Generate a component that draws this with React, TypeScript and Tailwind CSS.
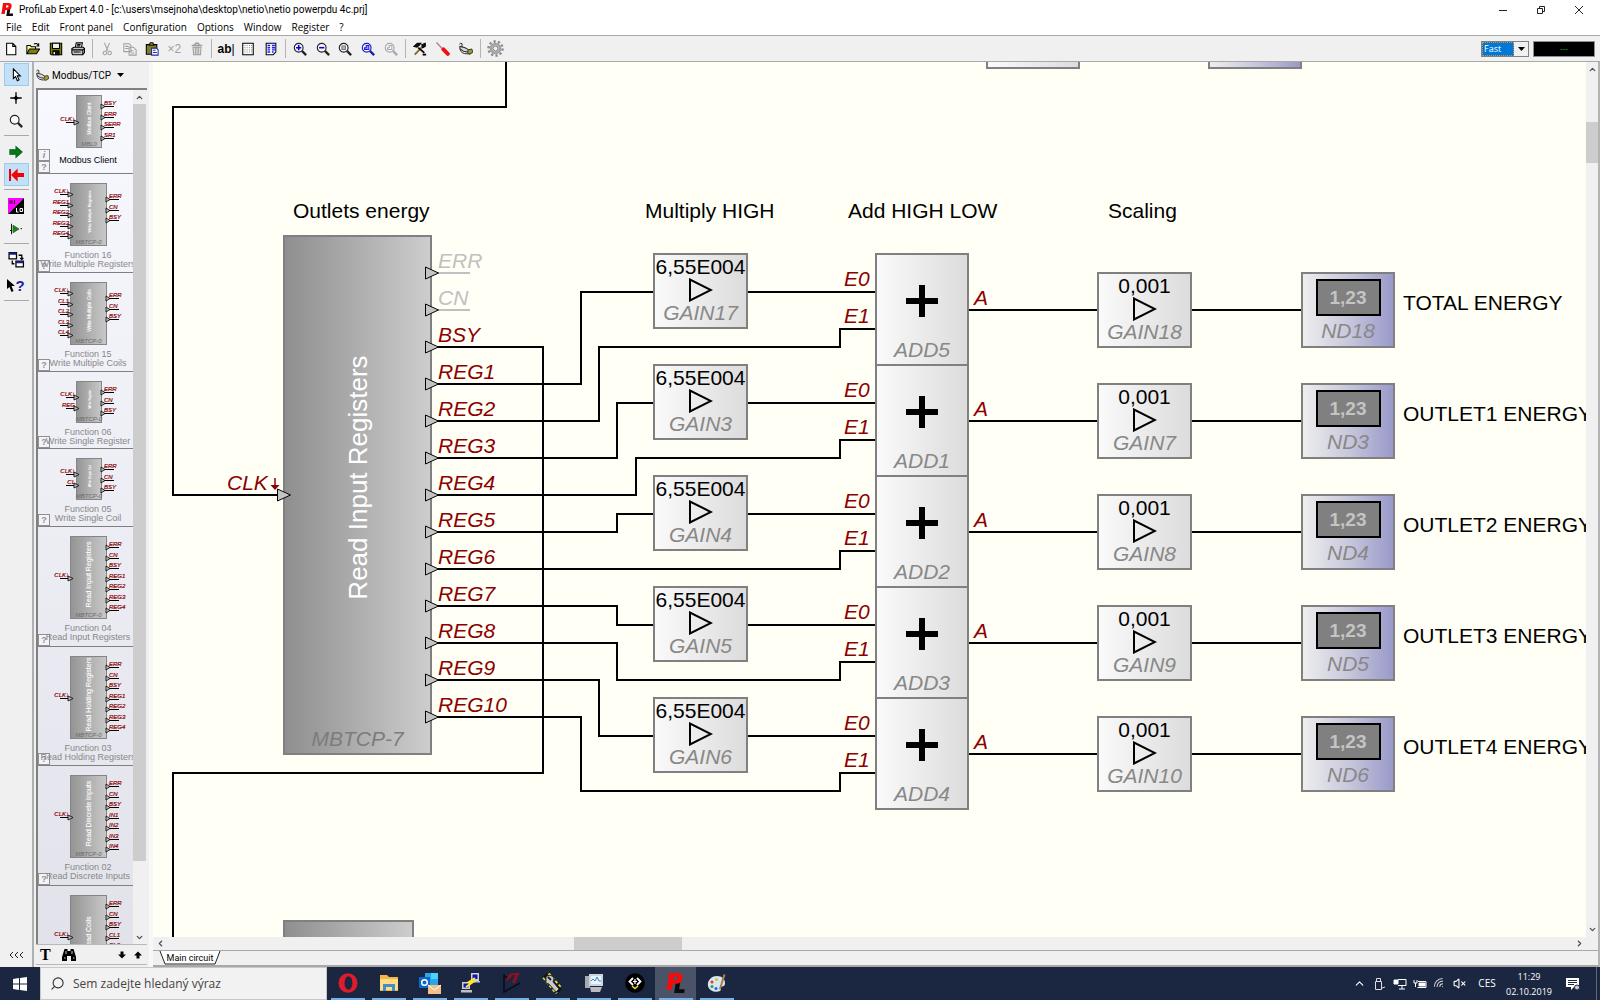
import React from "react";
import { ChevronUp, ChevronDown, ChevronLeft, ChevronRight, Search, Wifi, VolumeX } from "lucide-react";

type Kids = { children?: React.ReactNode };

/* ---------- shared drawings ---------- */

function Ico({ children, size = 14 }: Kids & { size?: number }) {
  return (
    <svg width={size} height={size} viewBox="0 0 16 16" fill="none" stroke="#000" strokeWidth="1.2" aria-hidden="true">
      {children}
    </svg>
  );
}

const Lens = ({ color = "#222", children }: Kids & { color?: string }) => (
  <Ico>
    <circle cx="6.500" cy="6.500" r="5" stroke={color} strokeWidth="1.3" fill="#f8f8ff" />
    <path d="M10.2 10.2L15 15" stroke={color} strokeWidth="2.6" />
    {children}
  </Ico>
);

const Plug = ({ size = 14 }: { size?: number }) => (
  <Ico size={size}>
    <path d="M0.500 2.500Q2 0.500 3.500 2V6M1 8c1 4 4 5.500 8 5.500h3" strokeWidth="1.1" stroke="#222" />
    <path d="M1 5l6 1.500 4 2.500-1 2.500-5-1-4-3z" fill="#d8d8d8" stroke="#333" />
    <path d="M10.500 9l4-1 1.500 3.500-4 2.500-2-2z" fill="#a8a020" stroke="#444" />
  </Ico>
);

const LogoPL = ({ size = 14 }: { size?: number }) => (
  <svg width={size} height={size} viewBox="0 0 16 16" aria-hidden="true">
    <path d="M8 6.500H11.500L10.500 13H15L14.500 16H6.500Z" fill="#0a0a0a" />
    <path d="M2.500 0H9q5 0 4 4.500Q12.500 8.500 8 8.500H5.500L4.500 13.500H0.500ZM6.500 2.800L6 5.600H7.500Q9 5.600 9.200 4.200Q9.400 2.800 8 2.800Z" fill="#f40c0c" fillRule="evenodd" />
  </svg>
);

/* ---------- title and menu ---------- */

function TitleBar() {
  return (
    <header className="flex h-[19px] items-center bg-white pr-[2px] pl-px">
      <LogoPL size={13} />
      <h1 className="ml-[5px] flex-1 font-['Roboto',sans-serif] text-[10px] leading-[19px]">
        ProfiLab Expert 4.0 - [c:\users\msejnoha\desktop\netio\netio powerpdu 4c.prj]
      </h1>
      <button aria-label="Minimize" className="flex w-[38px] justify-center">
        <svg width="10" height="10"><path d="M1 5.500h8" stroke="#222" /></svg>
      </button>
      <button aria-label="Restore" className="flex w-[38px] justify-center">
        <svg width="10" height="10" fill="none" stroke="#222"><path d="M1.500 3.500h5v5h-5zM3.500 3V1.500h5v5H7" /></svg>
      </button>
      <button aria-label="Close" className="flex w-[38px] justify-center">
        <svg width="10" height="10" stroke="#222"><path d="M1 1l8 8M9 1l-8 8" /></svg>
      </button>
    </header>
  );
}

function MenuBar() {
  const items = ["File", "Edit", "Front panel", "Configuration", "Options", "Window", "Register", "?"];
  return (
    <nav className="flex h-[16px] gap-[10px] bg-white pl-[6px] text-[10px] leading-[16px]">
      {items.map((t) => (
        <button key={t}>{t}</button>
      ))}
    </nav>
  );
}

/* ---------- main toolbar ---------- */

const toolGroups: { width: string; tools: [string, React.ReactNode][] }[] = [
  {
    width: "w-[89px]",
    tools: [
      ["New", <Ico><path d="M3 1.500h7l3.500 3.500v9.500H3zM10 1.500V5h3.500" fill="#fff" /></Ico>],
      ["Open", <Ico><path d="M1 13V4h4l1 1.500h5V8" fill="#ffffa0" /><path d="M1 13.500L4 8h11.500L12 13.500z" fill="#808000" /><path d="M9 2.500c2-1.500 4-1 5 1.500M14.500 1.500V4.500H12" /></Ico>],
      ["Save", <Ico><path d="M1.500 1.500h13v13h-12l-1-1z" fill="#808000" /><path d="M4 1.500h8v6H4z" fill="#f0f0f0" /><path d="M4.500 10h7v4.500h-7z" fill="#111" /><path d="M6 11.500v2.500" stroke="#fff" strokeWidth="1.500" /></Ico>],
      ["Print", <Ico><path d="M5 6l1-5h7l-1 5" fill="#fff" /><path d="M1 7.500L3.500 6H14l1.500 1.500V12l-2 2.500H2L1 13z" fill="#c8c8c8" /><path d="M1 9h12.500v5M13.500 9l2-1.500M3 11.500h8M7 3h4M6.500 4.500h4" /><path d="M9 11.500h2" stroke="#b0a000" /></Ico>],
    ],
  },
  {
    width: "w-[112px]",
    tools: [
      ["Cut", <Ico><g stroke="#a0a0a0"><path d="M5 1l4 9M11 1L7 10" /><circle cx="5.500" cy="12.500" r="2" /><circle cx="11" cy="12.500" r="2" /></g></Ico>],
      ["Copy", <Ico><g stroke="#a0a0a0"><path d="M1 2h6l2 2v7H1zM7 6h5l3 3v6H7z" fill="#f2f2f2" /><path d="M2.500 5h4M2.500 7.500h4M9 10h3M9 12.500h4" /></g></Ico>],
      ["Paste", <Ico><path d="M1.500 3h12v11h-12z" fill="#808020" /><path d="M5 3.500L6 1h3l1 2.500z" fill="#e8e050" /><path d="M7.500 7h5.500l2 2v6H7.500z" fill="#fff" stroke="#1c2c9c" /><path d="M9 9.500h3M9 12h4.500" stroke="#1c2c9c" /></Ico>],
      ["Duplicate", <span className="text-[12px] leading-none text-[#a0a0a0]">×2</span>],
      ["Delete", <Ico><g stroke="#9c9c9c"><path d="M2 4h12M5.500 3.500l1-2h3l1 2" strokeWidth="1.600" /><path d="M3.500 6h9l-.5 8.500h-8zM6 6.500V14M8 6.500V14M10 6.500V14" /></g></Ico>],
    ],
  },
  {
    width: "w-[67px]",
    tools: [
      ["Text", <span className="text-[12px] leading-none font-bold">ab<span className="font-normal">|</span></span>],
      ["Grid", <Ico><path d="M2 1.500h12v13H2z" fill="#fff" /><path d="M4 4h9M4 6.500h9M4 9h9M4 11.500h9" stroke="#666" strokeDasharray="1 1.500" strokeWidth="1" /></Ico>],
      ["Parts list", <Ico><path d="M2.500 1.500h11v10l-3 3h-8z" fill="#fff" /><path d="M4 4h3M9 4h3.500M4 6.500h3M9 6.500h3.500M4 9h3M9 9h3.500M4 11.500h3M9 11.500h2" stroke="#1818ff" strokeWidth="1.600" /></Ico>],
    ],
  },
  {
    width: "w-[113px]",
    tools: [
      ["Zoom in", <Lens><path d="M3.500 6.500h6M6.500 3.500v6" stroke="#0000e0" strokeWidth="1.800" /></Lens>],
      ["Zoom out", <Lens><path d="M3.500 6.500h6" stroke="#0000e0" strokeWidth="1.800" /></Lens>],
      ["Zoom page", <Lens><path d="M4.500 4.500h4v4h-4z" stroke="#777" fill="#bbb" /></Lens>],
      ["Zoom all", <Lens color="#1c1cb0"><path d="M4 8.500V6.500h2V4h3v4.500z" stroke="#2020e0" fill="#99f" /></Lens>],
      ["Zoom selection", <Lens color="#a8a8a8"><path d="M4 8.500V6.500h2V4h3v4.500z" stroke="#a8a8a8" /></Lens>],
    ],
  },
  {
    width: "w-[68px]",
    tools: [
      ["Build", <Ico><path d="M2 14.500L11 5" strokeWidth="2.200" stroke="#8a6a20" /><path d="M1 5l4-3.500h4L7 4 4.500 6zM10 3l4-1.500V5l-3 1.500z" fill="#111" /><path d="M6 6.500l7 6M11 14.500h4" strokeWidth="2" /></Ico>],
      ["Settings", <Ico><path d="M0.500 0.500l7 7.500" stroke="#a88" strokeWidth="1.600" /><path d="M8.500 8.500l5 5" stroke="#f01010" strokeWidth="4.500" strokeLinecap="round" /></Ico>],
      ["Connector", <Plug />],
    ],
  },
];

function Toolbar() {
  return (
    <div role="toolbar" aria-label="Main tools" className="flex h-[27px] items-center border-y border-[#a8a8a8] bg-[#f0f0f0] font-['Liberation_Sans',sans-serif]">
      {toolGroups.map((g, i) => (
        <React.Fragment key={i}>
          <div className={"flex " + g.width}>
            {g.tools.map(([name, icon]) => (
              <button key={name} aria-label={name} className="flex h-[20px] flex-1 items-center justify-center">
                {icon}
              </button>
            ))}
          </div>
          <div className="mx-[3px] h-[19px] w-px bg-[#b4b4b4]" />
        </React.Fragment>
      ))}
      <button aria-label="Options" className="flex h-[20px] w-[22px] items-center justify-center">
        <svg width="17" height="17" viewBox="0 0 17 17" fill="none" stroke="#8a8a8a">
          <circle cx="8.500" cy="8.500" r="7" strokeWidth="2.500" strokeDasharray="2.2 2.200" />
          <circle cx="8.500" cy="8.500" r="4.500" strokeWidth="2.600" stroke="#a0a0a0" />
          <circle cx="8.500" cy="8.500" r="2.500" strokeWidth="1" stroke="#777" />
        </svg>
      </button>
      <div className="flex-1" />
      <div className="relative mr-[4px] flex h-[16px] w-[48px] border border-[#808080] bg-white">
        <select aria-label="Simulation speed" className="w-[32px] appearance-none border border-dotted border-[#e09030] bg-[#0078d7] px-px font-['Open_Sans',sans-serif] text-[9px] leading-[12px] text-white">
          <option>Fast</option>
        </select>
        <span className="pointer-events-none flex flex-1 items-center justify-center bg-[#f0f0f0]">
          <svg width="7" height="4"><path d="M0 0h7L3.500 4z" /></svg>
        </span>
      </div>
      <output className="mr-[5px] h-[16px] w-[62px] border border-[#909090] bg-black text-center text-[8px] leading-[13px] text-[#18c018]">---</output>
    </div>
  );
}

/* ---------- left tool strip ---------- */

const Rule = () => <div className="mt-[3px] mb-[4px] h-px w-[25px] shrink-0 bg-[#a8a8a8]" />;

function SideButton({ label, active, children }: Kids & { label: string; active?: boolean }) {
  return (
    <button
      aria-label={label}
      className={
        active
          ? "flex h-[23px] w-[25px] items-center justify-center border border-[#99cdf0] bg-[#c4e0f6]"
          : "flex h-[23px] w-[25px] items-center justify-center"
      }
    >
      {children}
    </button>
  );
}

function ToolStrip() {
  return (
    <div role="toolbar" aria-label="Edit tools" className="flex w-[34px] shrink-0 flex-col items-center border-r-2 border-[#b0b0b0] bg-[#f0f0f0] pt-px">
      <SideButton label="Select" active><Ico><path d="M5 1v11l2.500-2.200L9.500 14.500l2-1L9.500 9H13z" fill="#fff" /></Ico></SideButton>
      <SideButton label="Cross"><Ico><path d="M8 1.500v13M1.500 8h13" strokeWidth="1.500" /><path d="M8 6L10 8 8 10 6 8z" fill="#000" /></Ico></SideButton>
      <SideButton label="Zoom"><Lens /></SideButton>
      <Rule />
      <SideButton label="Run"><Ico><path d="M1 5.500h7V2l7 6-7 6v-3.500H1z" fill="#0a7a0a" stroke="#063" /></Ico></SideButton>
      <SideButton label="Stop" active><Ico size={16}><path d="M2 2v12" stroke="#e00" strokeWidth="2" /><path d="M4 8l5-5v3.500h7v3H9V13z" fill="#f00" stroke="#e00" /></Ico></SideButton>
      <Rule />
      <SideButton label="High low">
        <svg width="16" height="16" viewBox="0 0 16 16" aria-hidden="true">
          <path d="M0 0h16L0 16z" fill="#f0f" />
          <path d="M16 0v16H0z" fill="#000" />
          <path d="M2 2v4M2 4h2M4 2v4M6.500 2v4" stroke="#404" />
          <path d="M8.500 10v4h2M12 10.500h2.500v3H12z" stroke="#fff" fill="none" />
        </svg>
      </SideButton>
      <SideButton label="Probe"><Ico size={12}><path d="M2 1v14M14 7.500h2M0 10h2" /><path d="M4 3l8 5-8 5z" fill="#0a8a1a" stroke="#363" /></Ico></SideButton>
      <Rule />
      <SideButton label="Switch window"><Ico size={17}><path d="M1 1.500h7v6H1zM7.500 9.500h7v5.500h-7z" fill="#fff" /><path d="M1 2.500h7M7.500 10.500h7" stroke="#1a1a90" strokeWidth="2" /><path d="M10 4h3v4M11.500 6.500L13 8l1.500-1.500M4 9v3h2" /></Ico></SideButton>
      <div className="h-[3px]" />
      <SideButton label="Context help">
        <span className="flex items-center font-['Liberation_Sans',sans-serif] text-[15px] leading-none font-bold text-[#2020a0]">
          <svg width="8" height="13" viewBox="0 0 8 13"><path d="M0 0v10l2.500-2L4.500 13l2-1L4.500 7H8z" /></svg>?
        </span>
      </SideButton>
      <Rule />
      <button aria-label="Collapse" className="mt-auto mb-[8px] flex">
        {[0, 1, 2].map((n) => (
          <svg key={n} width="5" height="8" fill="none" stroke="#222"><path d="M4 1L1 4l3 3" /></svg>
        ))}
      </button>
    </div>
  );
}

/* ---------- component palette ---------- */

type Part = {
  name: string[];
  height: string;
  narrow?: boolean;
  chip: number;
  body: string;
  bodySize: number;
  inputs: string[];
  inY: number;
  outputs: string[];
  outY: number;
  tag: string;
};

const regs = ["ERR", "CN", "BSY", "REG1", "REG2", "REG3", "REG4"];
const parts: Part[] = [
  { name: ["Modbus Client"], height: "h-[84px]", narrow: true, chip: 53, body: "Modbus Client", bodySize: 5, inputs: ["CLK↓"], inY: 27, outputs: ["BSY", "ERR", "SERR", "SR1"], outY: 11, tag: "MBL0" },
  { name: ["Function 16", "Write Multiple Registers"], height: "h-[99px]", chip: 63, body: "Write Multiple Registers", bodySize: 4, inputs: ["CLK↓", "REG1", "REG2", "REG3", "REG4"], inY: 11, outputs: ["ERR", "CN", "BSY"], outY: 16, tag: "MBTCP-0" },
  { name: ["Function 15", "Write Multiple Coils"], height: "h-[99px]", chip: 63, body: "Write Multiple Coils", bodySize: 5, inputs: ["CLK↓", "CL1", "CL2", "CL3", "CL4"], inY: 11, outputs: ["ERR", "CN", "BSY"], outY: 16, tag: "MBTCP-0" },
  { name: ["Function 06", "Write Single Register"], height: "h-[77px]", narrow: true, chip: 42, body: "Write Register", bodySize: 3, inputs: ["CLK↓", "REG"], inY: 16, outputs: ["ERR", "CN", "BSY"], outY: 11, tag: "MBTCP-0" },
  { name: ["Function 05", "Write Single Coil"], height: "h-[78px]", narrow: true, chip: 42, body: "Write Single Coil", bodySize: 3, inputs: ["CLK↓", "CL"], inY: 16, outputs: ["ERR", "CN", "BSY"], outY: 11, tag: "MBTCP-0" },
  { name: ["Function 04", "Read Input Registers"], height: "h-[120px]", chip: 83, body: "Read Input Registers", bodySize: 7, inputs: ["CLK↓"], inY: 42, outputs: regs, outY: 11, tag: "MBTCP-0" },
  { name: ["Function 03", "Read Holding Registers"], height: "h-[119px]", chip: 83, body: "Read Holding Registers", bodySize: 7, inputs: ["CLK↓"], inY: 42, outputs: regs, outY: 11, tag: "MBTCP-0" },
  { name: ["Function 02", "Read Discrete Inputs"], height: "h-[120px]", chip: 83, body: "Read Discrete Inputs", bodySize: 7, inputs: ["CLK↓"], inY: 42, outputs: ["ERR", "CN", "BSY", "IN1", "IN2", "IN3", "IN4"], outY: 11, tag: "MBTCP-0" },
  { name: ["Function 01", "Read Coils"], height: "h-[120px]", chip: 83, body: "Read Coils", bodySize: 7, inputs: ["CLK↓"], inY: 42, outputs: ["ERR", "CN", "BSY", "CL1", "CL2", "CL3", "CL4"], outY: 11, tag: "MBTCP-0" },
];

const maroon = "#8b0000";

function ChipDrawing({ p }: { p: Part }) {
  const x0 = p.narrow ? 38 : 32;
  const x1 = p.narrow ? 64 : 69;
  const mid = (x0 + x1) / 2;
  return (
    <svg width="94" height={p.chip} className="block overflow-visible" fontFamily="Liberation Sans, Arial, sans-serif">
      <defs>
        <linearGradient id="chip"><stop offset="0" stopColor="#949494" /><stop offset="1" stopColor="#c8c8c8" /></linearGradient>
      </defs>
      <rect x={x0 + 0.5} y="0.5" width={x1 - x0 - 1} height={p.chip - 1} fill="url(#chip)" stroke="#858585" />
      <text transform={`translate(${mid + 2} ${p.chip / 2 - 3}) rotate(-90)`} textAnchor="middle" fontSize={p.bodySize} fill="#fff" stroke="#fff" strokeWidth="0.1">{p.body}</text>
      <text x={mid} y={p.chip - 2} textAnchor="middle" fontSize="6" fontStyle="italic" fill="#6c6c6c">{p.tag}</text>
      {p.inputs.map((t, i) => {
        const y = p.inY + Math.round(i * 10.5);
        return (
          <g key={t}>
            <path d={`M${x0 - 10} ${y + 0.5}H${x0}`} stroke="#000" />
            <path d={`M${x0 - 2} ${y - 2}l5 2.500l-5 2.500z`} fill="#bbb" stroke="#000" strokeWidth="0.8" />
            <text x={x0 - 1} y={y - 1} textAnchor="end" fontSize="6" fontStyle="italic" fill={maroon} stroke={maroon} strokeWidth="0.2">{t}</text>
          </g>
        );
      })}
      {p.outputs.map((t, i) => {
        const y = p.outY + Math.round(i * 10.5);
        return (
          <g key={t}>
            <path d={`M${x1} ${y + 0.5}h12`} stroke="#000" />
            <path d={`M${x1 - 1} ${y - 2}l4 2.500l-4 2.500z`} fill="#bbb" stroke="#000" strokeWidth="0.8" />
            <text x={x1 + 2} y={y - 1} fontSize="6" fontStyle="italic" fill={maroon} stroke={maroon} strokeWidth="0.2">{t}</text>
          </g>
        );
      })}
    </svg>
  );
}

const hintBox = "flex h-[12px] w-[12px] items-center justify-center border border-[#909090] bg-[#f4f4f8] text-[9px] leading-none font-bold text-[#909090]";

function Palette() {
  return (
    <aside className="flex w-[113px] shrink-0 flex-col pl-[2px]">
      <button className="flex h-[26px] items-center gap-[3px] font-['Roboto',sans-serif] text-[10px]">
        <Plug size={13} />
        <span>Modbus/TCP</span>
        <svg width="7" height="4" className="ml-[3px]"><path d="M0 0h7L3.500 4z" /></svg>
      </button>
      <div className="flex min-h-0 flex-1 border-t-2 border-l-2 border-[#808080]">
        <ul className="min-h-0 w-[95px] overflow-hidden bg-linear-to-b from-[#f8f8ff] to-[#e2e2ea] font-['Liberation_Sans',sans-serif] text-[9px] leading-[9px]">
          {parts.map((p, i) => (
            <li key={p.body} className={"relative flex shrink-0 flex-col border-b border-[#808080] " + p.height + (i === 0 ? " pt-[5px]" : " pt-[9px]")}>
              <ChipDrawing p={p} />
              <div className="absolute bottom-0 left-0">
                {i === 0 && <button className={hintBox + " italic"} aria-label="Info">i</button>}
                <button className={hintBox} aria-label={"Help for " + p.name[0]}>?</button>
              </div>
              <div className={i === 0 ? "relative mt-[8px] pl-[5px] text-black" : "relative mt-[5px] pl-[5px] text-[#888]"}>
                {p.name.map((n) => (
                  <div key={n} className="flex justify-center whitespace-nowrap">{n}</div>
                ))}
              </div>
            </li>
          ))}
        </ul>
        <div className="flex w-[13px] flex-col items-center bg-[#f0f0f0]">
          <button aria-label="Scroll up" className="flex h-[14px] items-center"><ChevronUp size={9} strokeWidth={3.5} color="#505050" /></button>
          <div className="w-full flex-[11] bg-[#cdcdcd]" />
          <div className="flex-1" />
          <button aria-label="Scroll down" className="flex h-[14px] items-center"><ChevronDown size={9} strokeWidth={3.5} color="#505050" /></button>
        </div>
      </div>
      <div className="mb-[2px] flex h-[21px] items-center border-t border-b border-[#b8b8b8] pl-[4px]">
        <button aria-label="Text" className="font-['Liberation_Serif',serif] text-[16px] leading-none font-bold">T</button>
        <button aria-label="Find" className="ml-[11px]">
          <svg width="14" height="12" viewBox="0 0 14 12"><path d="M2.500 0h3v2h3V0h3l2.500 8v4H9V7H5v5H0V8z" /><path d="M2 9h1.500M11 9h1.500M4 2v3M10 2v3" stroke="#ccc" /></svg>
        </button>
        <button aria-label="Next" className="mr-[8px] ml-auto"><svg width="8" height="8"><path d="M2.500 0.500h3v3H8L4 7.500 0 3.500h2.500z" /></svg></button>
        <button aria-label="Previous" className="mr-[5px]"><svg width="8" height="8"><path d="M2.500 7.500h3v-3H8L4 0.500 0 4.500h2.500z" /></svg></button>
      </div>
    </aside>
  );
}

/* ---------- circuit canvas ---------- */

const at = (left: number, top: number) => ({ left, top });
const PITCH = 111;

const wires = [
  "M353 0V45H20V433H130",
  "M284 285H390V711H20V1200",
  "M284 322H428V230H500",
  "M284 359H446V285H687V267H722",
  "M284 396H464V341H500",
  "M284 433H483V396H687V378H722",
  "M284 470H464V452H500",
  "M284 507H687V489H722",
  "M284 544H464V563H500",
  "M284 581H464V618H687V600H722",
  "M284 618H446V674H500",
  "M284 655H428V729H687V711H722",
];

const pins = ["ERR", "CN", "BSY", "REG1", "REG2", "REG3", "REG4", "REG5", "REG6", "REG7", "REG8", "REG9", "REG10"];

const rows = [
  { gain: "GAIN17", add: "ADD5", scale: "GAIN18", nd: "ND18", label: "TOTAL ENERGY" },
  { gain: "GAIN3", add: "ADD1", scale: "GAIN7", nd: "ND3", label: "OUTLET1 ENERGY" },
  { gain: "GAIN4", add: "ADD2", scale: "GAIN8", nd: "ND4", label: "OUTLET2 ENERGY" },
  { gain: "GAIN5", add: "ADD3", scale: "GAIN9", nd: "ND5", label: "OUTLET3 ENERGY" },
  { gain: "GAIN6", add: "ADD4", scale: "GAIN10", nd: "ND6", label: "OUTLET4 ENERGY" },
];

const heads: [string, number][] = [["Outlets energy", 140], ["Multiply HIGH", 492], ["Add HIGH LOW", 695], ["Scaling", 955]];

function Label({ x, y, tone = "text-black", children }: Kids & { x: number; y: number; tone?: string }) {
  return (
    <span className={"absolute leading-[24px] whitespace-nowrap " + tone} style={at(x, y - 19)}>
      {children}
    </span>
  );
}

function Gain({ x, y, value, name }: { x: number; y: number; value: string; name: string }) {
  return (
    <div className="absolute flex h-[76px] w-[95px] flex-col items-center border-2 border-[#808080] bg-linear-to-r from-[#fafafa] to-[#dcdcdc] pt-[2px] leading-[20px]" style={at(x, y)}>
      <span>{value}</span>
      <svg width="24" height="24" className="mt-px shrink-0" fill="none" stroke="#000" strokeWidth="2"><path d="M1 1.500v21L22 12z" /></svg>
      <span className="mt-px text-[#888] italic">{name}</span>
    </div>
  );
}

function Adder({ x, y, name }: { x: number; y: number; name: string }) {
  return (
    <div className="absolute flex h-[113px] w-[94px] flex-col items-center border-2 border-[#808080] bg-linear-to-r from-[#fafafa] to-[#dcdcdc] pt-[30px] leading-[20px]" style={at(x, y)}>
      <svg width="32" height="32" className="shrink-0" stroke="#000" strokeWidth="6"><path d="M0 16h32M16 0v32" /></svg>
      <span className="mt-[23px] text-[#888] italic">{name}</span>
    </div>
  );
}

function Display({ x, y, name }: { x: number; y: number; name: string }) {
  return (
    <div className="absolute flex h-[76px] w-[94px] flex-col items-center border-2 border-[#808080] bg-linear-to-r from-[#eeeeee] via-[#c8c8dc] to-[#9a9aca] pt-[5px] leading-[20px]" style={at(x, y)}>
      <span className="flex h-[37px] w-[65px] items-center justify-center border-2 border-black bg-[#808080] text-[19px] font-bold text-[#c4c4c4]">1,23</span>
      <span className="mt-[5px] text-[#888] italic">{name}</span>
    </div>
  );
}

function Circuit() {
  return (
    <div className="relative min-w-0 flex-1 overflow-hidden bg-[#fffff5] font-['Liberation_Sans',Arial,sans-serif] text-[21px]">
      <div className="absolute h-[520px] w-[149px] border-2 border-[#808080] bg-linear-to-r from-[#8f8f8f] to-[#cdcdcd]" style={at(130, 173)}>
        <span className="absolute inset-x-0 top-0 flex h-[480px] items-center justify-center">
          <span className="-rotate-90 pt-[2px] text-[26px] whitespace-nowrap text-white">Read Input Registers</span>
        </span>
        <span className="absolute inset-x-0 bottom-[2px] text-center leading-[24px] text-[#7c7c7c] italic">MBTCP-7</span>
      </div>
      <div className="absolute h-[100px] w-[131px] border-2 border-[#808080] bg-linear-to-r from-[#8f8f8f] to-[#cdcdcd]" style={at(130, 858)} />
      <div className="absolute h-[76px] w-[94px] border-2 border-[#808080] bg-linear-to-r from-[#fafafa] to-[#dcdcdc]" style={at(833, -69)} />
      <div className="absolute h-[76px] w-[94px] border-2 border-[#808080] bg-linear-to-r from-[#eeeeee] via-[#c8c8dc] to-[#9a9aca]" style={at(1055, -69)} />

      <svg className="absolute inset-0 h-full w-full" fill="none" stroke="#000" strokeWidth="2">
        {wires.map((d) => <path key={d} d={d} />)}
        {rows.map((r, i) => (
          <path key={r.nd} d={`M595 ${230 + i * PITCH}H722M816 ${248 + i * PITCH}H945M1039 ${248 + i * PITCH}H1148`} />
        ))}
        <path d="M284 211h33M284 248h33" stroke="#c0c0c0" />
        {pins.map((p, i) => (
          <path key={p} d={`M272.500 ${205 + i * 37}v12l13-6z`} fill="#c4c4c4" strokeWidth="1" />
        ))}
        <path d="M124.500 427v12l13-6z" fill="#c4c4c4" strokeWidth="1" />
        <path d="M122 416v8" stroke="#8b0000" strokeWidth="1.500" />
        <path d="M117.500 423h9l-4.500 5z" fill="#8b0000" stroke="none" />
      </svg>

      {heads.map(([t, x]) => <Label key={t} x={x} y={156}>{t}</Label>)}
      <Label x={74} y={428} tone="italic text-[#8b0000]">CLK</Label>
      {pins.map((p, i) => (
        <Label key={p} x={285} y={206 + i * 37} tone={i < 2 ? "italic text-[#c0c0c0]" : "italic text-[#8b0000]"}>{p}</Label>
      ))}
      {rows.map((r, i) => {
        const dy = i * PITCH;
        return (
          <React.Fragment key={r.nd}>
            <Gain x={500} y={191 + dy} value="6,55E004" name={r.gain} />
            <Label x={691} y={224 + dy} tone="italic text-[#8b0000]">E0</Label>
            <Label x={691} y={261 + dy} tone="italic text-[#8b0000]">E1</Label>
            <Adder x={722} y={191 + dy} name={r.add} />
            <Label x={821} y={243 + dy} tone="italic text-[#8b0000]">A</Label>
            <Gain x={944} y={210 + dy} value="0,001" name={r.scale} />
            <Display x={1148} y={210 + dy} name={r.nd} />
            <Label x={1250} y={248 + dy}>{r.label}</Label>
          </React.Fragment>
        );
      })}
    </div>
  );
}

function Workspace() {
  return (
    <main className="ml-[2px] flex min-w-0 flex-1 flex-col border-r-2 border-l-4 border-r-[#b4b4b4] border-l-[#f8f8f8] bg-[#f0f0f0]">
      <div className="flex min-h-0 flex-1">
        <Circuit />
        <div className="flex w-[12px] flex-col items-center">
          <button aria-label="Scroll up" className="flex h-[15px] items-center"><ChevronUp size={9} strokeWidth={3.5} color="#505050" /></button>
          <div className="flex-[45]" />
          <div className="w-full flex-[41] bg-[#cdcdcd]" />
          <div className="flex-[758]" />
          <button aria-label="Scroll down" className="flex h-[15px] items-center"><ChevronDown size={9} strokeWidth={3.5} color="#505050" /></button>
        </div>
      </div>
      <div className="flex h-[13px] items-center pr-[12px]">
        <button aria-label="Scroll left" className="flex w-[14px] justify-center"><ChevronLeft size={9} strokeWidth={3.5} color="#505050" /></button>
        <div className="flex-[406]" />
        <div className="h-full flex-[108] bg-[#cdcdcd]" />
        <div className="flex-[889]" />
        <button aria-label="Scroll right" className="flex w-[14px] justify-center"><ChevronRight size={9} strokeWidth={3.5} color="#505050" /></button>
      </div>
      <div className="flex h-[17px] border-t border-b-2 border-[#a8a8a8] pl-[6px] font-['Roboto',sans-serif] text-[9px]">
        <button className="relative h-[13px] w-[62px]">
          <svg width="62" height="14" className="absolute inset-0" fill="#fff" stroke="#222"><path d="M1 0L6 13H56L61 0" /></svg>
          <span className="relative block leading-[14px] whitespace-nowrap">Main circuit</span>
        </button>
      </div>
    </main>
  );
}

/* ---------- taskbar ---------- */

const apps: [string, React.ReactNode][] = [
  ["Opera", <svg width="20" height="20" viewBox="0 0 20 20"><ellipse cx="10" cy="10" rx="9.500" ry="9.800" fill="#e01c2c" /><ellipse cx="10.500" cy="10" rx="4" ry="6.800" fill="#1b2741" /></svg>],
  ["File Explorer", <svg width="20" height="20" viewBox="0 0 20 20"><path d="M1 2h7l2 2h9v14H1z" fill="#f0b848" /><path d="M1 6h18v11H1z" fill="#ffdc80" /><path d="M4 18v-7h12v7h-3v-4H7v4z" fill="#3d8fd0" /></svg>],
  ["Outlook", <svg width="22" height="22" viewBox="0 0 22 22"><path d="M6 1h13v12H6z" fill="#28a8ea" /><path d="M12 1h7v6h-7z" fill="#50d0ff" /><path d="M0 5h11v11H0z" fill="#0a68c8" /><circle cx="5.500" cy="10.500" r="2.800" fill="none" stroke="#fff" strokeWidth="1.500" /><path d="M9 13h13v9H9z" fill="#f5c088" /><path d="M9 13l6.500 5L22 13" fill="none" stroke="#fff" /></svg>],
  ["PuTTY", <svg width="20" height="20" viewBox="0 0 20 20"><path d="M10 0h8v8h-8zM1 9h8v7H1z" fill="#d0d0d0" /><path d="M11.500 1.500h5v4.500h-5zM2.500 10.500h5v4h-5z" fill="#1010c0" /><path d="M0 17h11v2.500H0zM9 8h10v1.500H9z" fill="#c0c0c0" /><path d="M14 5L8 9l4 0-7 5" stroke="#ffe820" strokeWidth="2" fill="none" /></svg>],
  ["Simulator", <svg width="22" height="22" viewBox="0 0 22 22" fill="none"><path d="M3 2v18L19 11" stroke="#080c18" strokeWidth="1.500" /><path d="M3 4l6 3" stroke="#080c18" strokeWidth="1.500" /><path d="M5 9Q7 1 12 1h8l-2 1-4 9h-3l3-8h-3Q10 8 5 9z" fill="#8c1020" /></svg>],
  ["Service tool", <svg width="22" height="22" viewBox="0 0 22 22"><path d="M2 5l13 16M6 2l13 15" stroke="#e8d820" strokeWidth="4" strokeDasharray="3 2" /><path d="M3 3l15 16" stroke="#111" strokeWidth="5" /><path d="M4 5q4-4 8 1l-1 4 6 7-3 3-7-8-3-1z" fill="#c8ccd0" stroke="#333" /><path d="M6 5l3 3" stroke="#222" strokeWidth="2" /></svg>],
  ["Monitor", <svg width="20" height="20" viewBox="0 0 20 20"><path d="M1 3h5v12H1z" fill="#a8acb0" /><path d="M5 1h14v12H5z" fill="#d0d4d8" /><path d="M7 3h10v8H7z" fill="#e8f4ff" /><path d="M7 8l2-2 2 2 2-4 2 4h2" stroke="#2a88d0" fill="none" /><path d="M6 14h12l-2 5H7z" fill="#b8bcc0" /></svg>],
  ["NETIO", <svg width="20" height="20" viewBox="0 0 20 20" fill="none"><circle cx="10" cy="10" r="9.800" fill="#000" /><path d="M8 5L4.500 8.500 8 12M12 5l3.500 3.500L12 12" stroke="#fff" strokeWidth="1.800" /><path d="M10 6v5M8 8.500h4" stroke="#fff" strokeWidth="1.200" /><path d="M7 13l3 2.500 3-2.500" stroke="#e8e020" strokeWidth="1.600" /></svg>],
  ["ProfiLab", <LogoPL size={20} />],
  ["Paint", <svg width="20" height="20" viewBox="0 0 20 20"><path d="M10 3C4 3 0 8 1 13s8 7 12 5c2-1 0-3 1-4s4 0 4-4-3-7-8-7z" fill="#d4e8f4" /><circle cx="5" cy="9" r="1.500" fill="#e83030" /><circle cx="9.500" cy="6.500" r="1.500" fill="#f0b820" /><circle cx="5" cy="13.500" r="1.500" fill="#30a040" /><circle cx="9" cy="15.500" r="1.500" fill="#3060d0" /><path d="M16.500 1l2 1-5 15-1.500-1z" fill="#b07840" /></svg>],
];

function Taskbar() {
  return (
    <footer className="flex h-[33px] shrink-0 items-stretch bg-[#1b2741] text-white">
      <button aria-label="Start" className="flex w-[40px] items-center justify-center">
        <svg width="14" height="14" fill="#fff"><path d="M0 2l6-1v5.500H0zM7 1l7-1v6.500H7zM0 7.500h6V13l-6-1zM7 7.500h7V14l-7-1z" /></svg>
      </button>
      <label className="flex w-[287px] items-center border border-[#c8c8c8] bg-[#f2f2f2] pl-[9px] text-[#333]">
        <Search size={15} strokeWidth={1.8} className="-scale-x-100" />
        <input aria-label="Search" placeholder="Sem zadejte hledaný výraz" className="ml-[8px] min-w-0 flex-1 bg-transparent text-[12px] outline-none placeholder:text-[#444]" />
      </label>
      <div className="flex">
        {apps.map(([name, icon]) => (
          <button key={name} aria-label={name} className={"flex w-[41px] flex-col items-center " + (name === "ProfiLab" ? "bg-[#4a5368]" : "")}>
            <span className="flex flex-1 items-center">{icon}</span>
            <span className="h-[2px] w-[34px] bg-[#76b0e4]" />
          </button>
        ))}
      </div>
      <div className="ml-auto flex items-center text-[9px]">
        <button aria-label="Hidden icons" className="w-[20px]"><ChevronUp size={13} /></button>
        <button aria-label="USB" className="w-[20px]"><svg width="12" height="14" fill="none" stroke="#ddd"><path d="M2.500 4.500h6v8h-6zM3.500 4V1.500h4V4M9 11l3-1" /></svg></button>
        <button aria-label="Display" className="w-[20px]"><svg width="14" height="13" fill="none" stroke="#fff"><path d="M5 2.500h8v6H5M9 9v3M6 12h6" /><path d="M1 3h4v4H1z" fill="#fff" /></svg></button>
        <button aria-label="Battery" className="w-[20px]"><svg width="15" height="12" fill="none" stroke="#fff"><path d="M5 3.500h8v6H4.500" /><path d="M6 5h6v3H6z" fill="#fff" /><path d="M1 2v3h3V2M2.500 5v4" /></svg></button>
        <button aria-label="Network" className="w-[20px]"><Wifi size={13} className="-rotate-45" color="#ccc" /></button>
        <button aria-label="Muted" className="w-[20px]"><VolumeX size={13} /></button>
        <button className="w-[28px] text-[10px]">CES</button>
        <time className="w-[56px] text-center leading-[15px]">11:29<br />02.10.2019</time>
        <button aria-label="Notifications" className="flex w-[32px] justify-center"><svg width="14" height="14"><path d="M0 1h13v9H8l-3 3v-3H0z" fill="#fff" /><path d="M2 3.500h9M2 5.500h9M2 7.500h6" stroke="#1b2741" /><circle cx="11" cy="10.500" r="2.500" fill="#ccc" stroke="#1b2741" /></svg></button>
        <div className="ml-[7px] h-[33px] w-px bg-[#667]" />
        <div className="w-[3px]" />
      </div>
    </footer>
  );
}

export default function App() {
  return (
    <div className="flex h-screen flex-col overflow-hidden bg-[#f0f0f0] font-['Open_Sans','Noto_Sans',sans-serif] text-black">
      <TitleBar />
      <MenuBar />
      <Toolbar />
      <div className="flex min-h-0 flex-1">
        <ToolStrip />
        <Palette />
        <Workspace />
      </div>
      <Taskbar />
    </div>
  );
}
